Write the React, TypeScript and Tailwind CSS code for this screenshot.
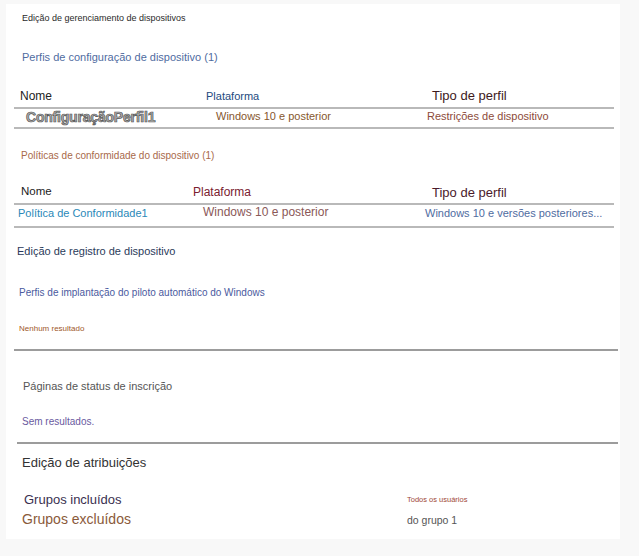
export default function App() {
  return (
    <div className="min-h-[556px] w-full bg-[#f8f8f8] pt-[4px] font-['Liberation_Sans',Arial,sans-serif]">
      <div className="ml-[6px] flex h-[535px] w-[614px] flex-col bg-white">
        {/* Device management */}
        <p className="ml-[16px] mt-[10px] text-[9px] leading-none text-[#2a2a2a]">
          Edição de gerenciamento de dispositivos
        </p>
        <p className="ml-[16px] mt-[29px] text-[11px] leading-none text-[#4f6c9f]">
          Perfis de configuração de dispositivo (1)
        </p>

        {/* Config profiles table */}
        <div className="ml-[8px] mt-[21px] w-[600px]">
          <div className="grid h-[25px] grid-cols-[190px_220px_1fr] items-center border-b-2 border-[#b9b9b9] leading-none">
            <span className="pl-[6px] text-[12px] text-[#222]">Nome</span>
            <span className="pl-[2px] pt-[2px] text-[11px] text-[#1d4a80]">Plataforma</span>
            <span className="pl-[8px] text-[13px] text-[#3e1a1c]">Tipo de perfil</span>
          </div>
          <div className="grid h-[20px] grid-cols-[190px_220px_1fr] items-center border-b-2 border-[#b9b9b9] pb-[2px] leading-none">
            <span className="pl-[12px] text-[14px] font-bold tracking-[-0.2px] text-[#b0b0b0] [-webkit-text-stroke:0.7px_#555]">
              ConfiguraçãoPerfil1
            </span>
            <span className="pl-[12px] pb-[1px] text-[11px] text-[#86572e]">Windows 10 e posterior</span>
            <span className="pl-[3px] pb-[1px] text-[11px] text-[#8d4a3a]">Restrições de dispositivo</span>
          </div>
        </div>

        {/* Compliance policies */}
        <p className="ml-[15px] mt-[21.5px] text-[10px] leading-none text-[#a8694a]">
          Políticas de conformidade do dispositivo (1)
        </p>
        <div className="ml-[8px] mt-[20.5px] w-[600px]">
          <div className="grid h-[24px] grid-cols-[175px_231px_1fr] items-center border-b-2 border-[#b9b9b9] leading-none">
            <span className="pl-[7px] text-[11.5px] text-[#222]">Nome</span>
            <span className="pl-[4px] text-[12px] text-[#7a2030]">Plataforma</span>
            <span className="pl-[12px] text-[13px] text-[#4a1a2a]">Tipo de perfil</span>
          </div>
          <div className="grid h-[23px] grid-cols-[175px_231px_1fr] items-start border-b-2 border-[#b9b9b9] leading-none whitespace-nowrap">
            <span className="pl-[4px] pt-[3px] text-[11px] text-[#2a88b8]">Política de Conformidade1</span>
            <span className="pl-[14px] pt-[1px] text-[12px] text-[#8a5858]">Windows 10 e posterior</span>
            <span className="pl-[5px] pt-[3px] text-[11px] text-[#4f6c9f]">Windows 10 e versões posteriores...</span>
          </div>
        </div>

        {/* Device enrollment */}
        <p className="ml-[11px] mt-[18px] text-[11px] leading-none text-[#2a3a5a]">
          Edição de registro de dispositivo
        </p>
        <p className="ml-[13px] mt-[30.5px] text-[10px] leading-none text-[#4b5a9e]">
          Perfis de implantação do piloto automático do Windows
        </p>
        <p className="ml-[13px] mt-[27px] text-[8px] leading-none text-[#a0582a]">Nenhum resultado</p>
        <div className="ml-[8px] mt-[16.5px] h-[2px] w-[604px] bg-[#9c9c9c]" />

        <p className="ml-[17px] mt-[29.5px] text-[11px] leading-none text-[#555]">
          Páginas de status de inscrição
        </p>
        <p className="ml-[16px] mt-[25.5px] text-[10px] leading-none text-[#6a5aa0]">Sem resultados.</p>
        <div className="ml-[11px] mt-[14.5px] h-[2px] w-[601px] bg-[#9c9c9c]" />

        {/* Assignments */}
        <p className="ml-[16px] mt-[12px] text-[13px] leading-none text-[#333]">Edição de atribuições</p>
        <div className="flex items-start">
          <div className="flex w-[401px] flex-col leading-none">
            <span className="ml-[18px] mt-[24.5px] text-[13px] text-[#3a3050]">Grupos incluídos</span>
            <span className="ml-[16px] mt-[6px] text-[14px] text-[#8a5a3a]">Grupos excluídos</span>
          </div>
          <div className="flex flex-col leading-none">
            <span className="mt-[27px] text-[7.5px] text-[#a04838]">Todos os usuários</span>
            <span className="mt-[11.5px] text-[10.5px] text-[#555]">do grupo 1</span>
          </div>
        </div>
      </div>
    </div>
  )
}
